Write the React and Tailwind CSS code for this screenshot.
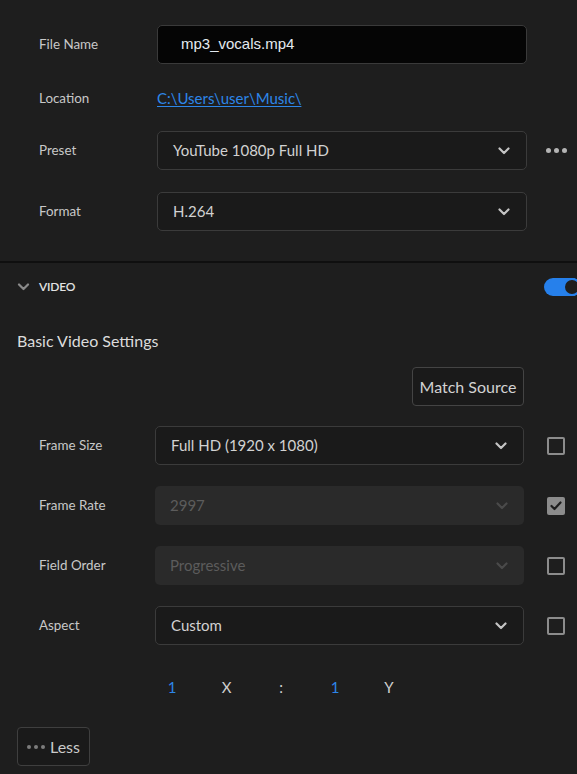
import React from "react";

const font = { fontFamily: "Lato, 'Noto Sans', sans-serif" };

function Chevron({ color = "#c4c4c4", w = 12 }) {
  return (
    <svg width={w} height="8" viewBox="0 0 12 8" fill="none">
      <path d="M1.5 1.5 L6 6 L10.5 1.5" stroke={color} strokeWidth="2.2" strokeLinecap="round" strokeLinejoin="round" />
    </svg>
  );
}

function Select({ value, disabled, w = "w-[370px]" }) {
  return (
    <div
      className={
        "h-[39px] rounded-[5px] flex items-center justify-between pl-[15px] pr-[16px] text-[15px] " +
        w +
        (disabled
          ? " bg-[#2a2a2a] text-[#5c5c5c]"
          : " bg-[#1a1a1a] border border-[#3b3b3b] text-[#d2d2d2]")
      }
    >
      <span>{value}</span>
      <Chevron color={disabled ? "#4a4a4a" : "#c4c4c4"} />
    </div>
  );
}

function Checkbox({ checked }) {
  return checked ? (
    <div className="w-[18px] h-[18px] rounded-[2px] bg-[#8c8c8c] flex items-center justify-center">
      <svg width="12" height="10" viewBox="0 0 12 10" fill="none">
        <path d="M1.5 5 L4.5 8 L10.5 1.5" stroke="#1e1e1e" strokeWidth="2.2" strokeLinecap="round" strokeLinejoin="round" />
      </svg>
    </div>
  ) : (
    <div className="w-[18px] h-[18px] rounded-[2px] border-2 border-[#8c8c8c]" />
  );
}

function Dots({ color = "#b4b4b4", size = 5, gap = 3 }) {
  return (
    <div className="flex items-center" style={{ gap }}>
      {[0, 1, 2].map((i) => (
        <span key={i} className="rounded-full block" style={{ width: size, height: size, background: color }} />
      ))}
    </div>
  );
}

function TopRow({ label, children, className = "" }) {
  return (
    <div className={"flex items-center pl-[39px] " + className}>
      <div className="w-[118px] text-[13.4px] text-[#c8c8c8]">{label}</div>
      {children}
    </div>
  );
}

function VRow({ label, value, disabled, checked }) {
  return (
    <div className="flex items-center pl-[39px]">
      <div className="w-[116px] text-[13.4px] text-[#c8c8c8]">{label}</div>
      <Select value={value} disabled={disabled} w="w-[369px]" />
      <div className="ml-[23px]">
        <Checkbox checked={checked} />
      </div>
    </div>
  );
}

export default function App() {
  return (
    <div className="w-[577px] h-[774px] bg-[#1e1e1e] overflow-hidden" style={font}>
      <div className="flex flex-col gap-[22px] pt-[25px] pb-[30px]">
        <TopRow label="File Name">
          <div className="w-[370px] h-[39px] rounded-[5px] bg-[#050505] border border-[#3a3a3a] flex items-center pl-[23px]">
            <span className="text-[15px] text-[#e4eaf0]" style={{ fontFamily: "'Liberation Sans', Arial, sans-serif" }}>
              mp3_vocals.mp4
            </span>
          </div>
        </TopRow>
        <TopRow label="Location" className="mt-[1px]">
          <div className="h-[22px] flex items-center">
            <span className="text-[15px] text-[#2d86e8] underline underline-offset-2">C:\Users\user\Music\</span>
          </div>
        </TopRow>
        <TopRow label="Preset">
          <Select value="YouTube 1080p Full HD" />
          <div className="ml-[19px]">
            <Dots />
          </div>
        </TopRow>
        <TopRow label="Format">
          <Select value="H.264" />
        </TopRow>
      </div>
      <div className="h-[2px] bg-[#0f0f0f]" />
      <div className="flex flex-col">
        <div className="h-[48px] flex items-center pl-[17px]">
          <Chevron color="#8a8a8a" w={13} />
          <span className="ml-[9px] text-[12px] font-semibold text-[#e2e2e2] tracking-[-0.2px]">VIDEO</span>
          <div className="ml-auto mr-[-4px] w-[37px] h-[18px] rounded-full bg-[#2680eb] flex items-center justify-end">
            <div className="w-[18px] h-[18px] rounded-full bg-[#1e1e1e] border-[2.5px] border-[#2680eb]" />
          </div>
        </div>
        <div className="mt-[18px] h-[24px] flex items-center pl-[17px] text-[16px] text-[#dcdcdc]">Basic Video Settings</div>
        <div className="mt-[14px] flex justify-end pr-[53px]">
          <div className="h-[39px] w-[112px] rounded-[4px] bg-[#1a1a1a] border border-[#444] flex items-center justify-center text-[16px] text-[#d2d2d2]">
            Match Source
          </div>
        </div>
        <div className="mt-[20px] flex flex-col gap-[21px]">
          <VRow label="Frame Size" value="Full HD (1920 x 1080)" />
          <VRow label="Frame Rate" value="2997" disabled checked />
          <VRow label="Field Order" value="Progressive" disabled />
          <VRow label="Aspect" value="Custom" />
        </div>
        <div className="mt-[30px] h-[24px] flex items-center pl-[145px] text-[15px]">
          <span className="w-[54px] text-center text-[#2d86e8]">1</span>
          <span className="w-[55px] text-center text-[#cfcfcf]">X</span>
          <span className="w-[54px] text-center text-[#cfcfcf]">:</span>
          <span className="w-[54px] text-center text-[#2d86e8]">1</span>
          <span className="w-[54px] text-center text-[#cfcfcf]">Y</span>
        </div>
        <div className="mt-[28px] pl-[17px]">
          <div className="h-[39px] w-[73px] rounded-[4px] bg-[#1a1a1a] border border-[#3f3f3f] flex items-center justify-center gap-[5px]">
            <Dots color="#7c7c7c" size={4} gap={3} />
            <span className="text-[16px] text-[#cacaca]">Less</span>
          </div>
        </div>
      </div>
    </div>
  );
}
